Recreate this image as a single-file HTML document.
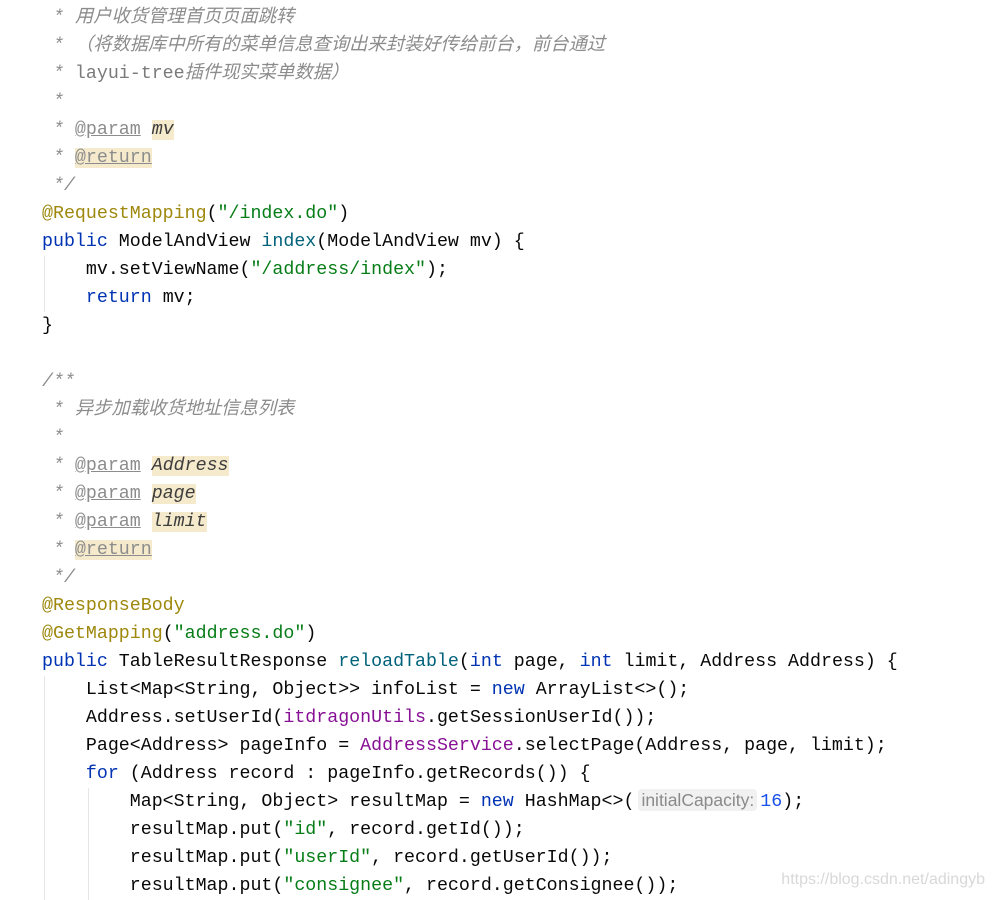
<!DOCTYPE html>
<html><head><meta charset="utf-8"><style>
body{margin:0;background:#fff;width:993px;height:900px;overflow:hidden;position:relative}
pre{position:absolute;left:42px;top:4px;margin:0;font-family:"Liberation Mono","Noto Sans CJK SC",monospace;font-size:18.3px;line-height:28px;color:#080808}
.c{color:#8c8c8c;font-style:italic}
.u{font-style:normal;color:#7a7a7a}
.t{color:#8c8c8c;font-style:normal;text-decoration:underline}
.v{color:#3d3d3d}
.h{background:#f5eacc}
.a{color:#9e880d}
.k{color:#0033b3}
.s{color:#067d17}
.m{color:#00627a}
.p{color:#871094}
.n{color:#1750eb}
.hint{font-family:"Liberation Sans",sans-serif;font-size:17.5px;line-height:18px;display:inline-block;color:#8a8a8a;background:#f1f1f1;border-radius:4px;padding:2px 3px;margin:0 3px 0 4px}
.g{position:absolute;width:1px;background:#e6e6e6}
.w{position:absolute;right:8px;top:871px;font-family:"Liberation Sans",sans-serif;font-size:16px;color:#d8d8d8}
</style></head><body>
<div class="g" style="left:44px;top:256px;height:56px"></div>
<div class="g" style="left:44px;top:676px;height:224px"></div>
<div class="g" style="left:88px;top:788px;height:112px"></div>
<pre><span class="c"> * 用户收货管理首页页面跳转
 * （将数据库中所有的菜单信息查询出来封装好传给前台，前台通过
 * <span class="u">layui-tree</span>插件现实菜单数据）
 *
 * <span class="t">@param</span> <span class="h v">mv</span>
 * <span class="t h">@return</span>
 */</span>
<span class="a">@RequestMapping</span>(<span class="s">"/index.do"</span>)
<span class="k">public</span> ModelAndView <span class="m">index</span>(ModelAndView mv) {
    mv.setViewName(<span class="s">"/address/index"</span>);
    <span class="k">return</span> mv;
}

<span class="c">/**
 * 异步加载收货地址信息列表
 *
 * <span class="t">@param</span> <span class="h v">Address</span>
 * <span class="t">@param</span> <span class="h v">page</span>
 * <span class="t">@param</span> <span class="h v">limit</span>
 * <span class="t h">@return</span>
 */</span>
<span class="a">@ResponseBody</span>
<span class="a">@GetMapping</span>(<span class="s">"address.do"</span>)
<span class="k">public</span> TableResultResponse <span class="m">reloadTable</span>(<span class="k">int</span> page, <span class="k">int</span> limit, Address Address) {
    List&lt;Map&lt;String, Object&gt;&gt; infoList = <span class="k">new</span> ArrayList&lt;&gt;();
    Address.setUserId(<span class="p">itdragonUtils</span>.getSessionUserId());
    Page&lt;Address&gt; pageInfo = <span class="p">AddressService</span>.selectPage(Address, page, limit);
    <span class="k">for</span> (Address record : pageInfo.getRecords()) {
        Map&lt;String, Object&gt; resultMap = <span class="k">new</span> HashMap&lt;&gt;(<span class="hint">initialCapacity:</span><span class="n">16</span>);
        resultMap.put(<span class="s">"id"</span>, record.getId());
        resultMap.put(<span class="s">"userId"</span>, record.getUserId());
        resultMap.put(<span class="s">"consignee"</span>, record.getConsignee());</pre>
<div class="w">https://blog.csdn.net/adingyb</div>
</body></html>
